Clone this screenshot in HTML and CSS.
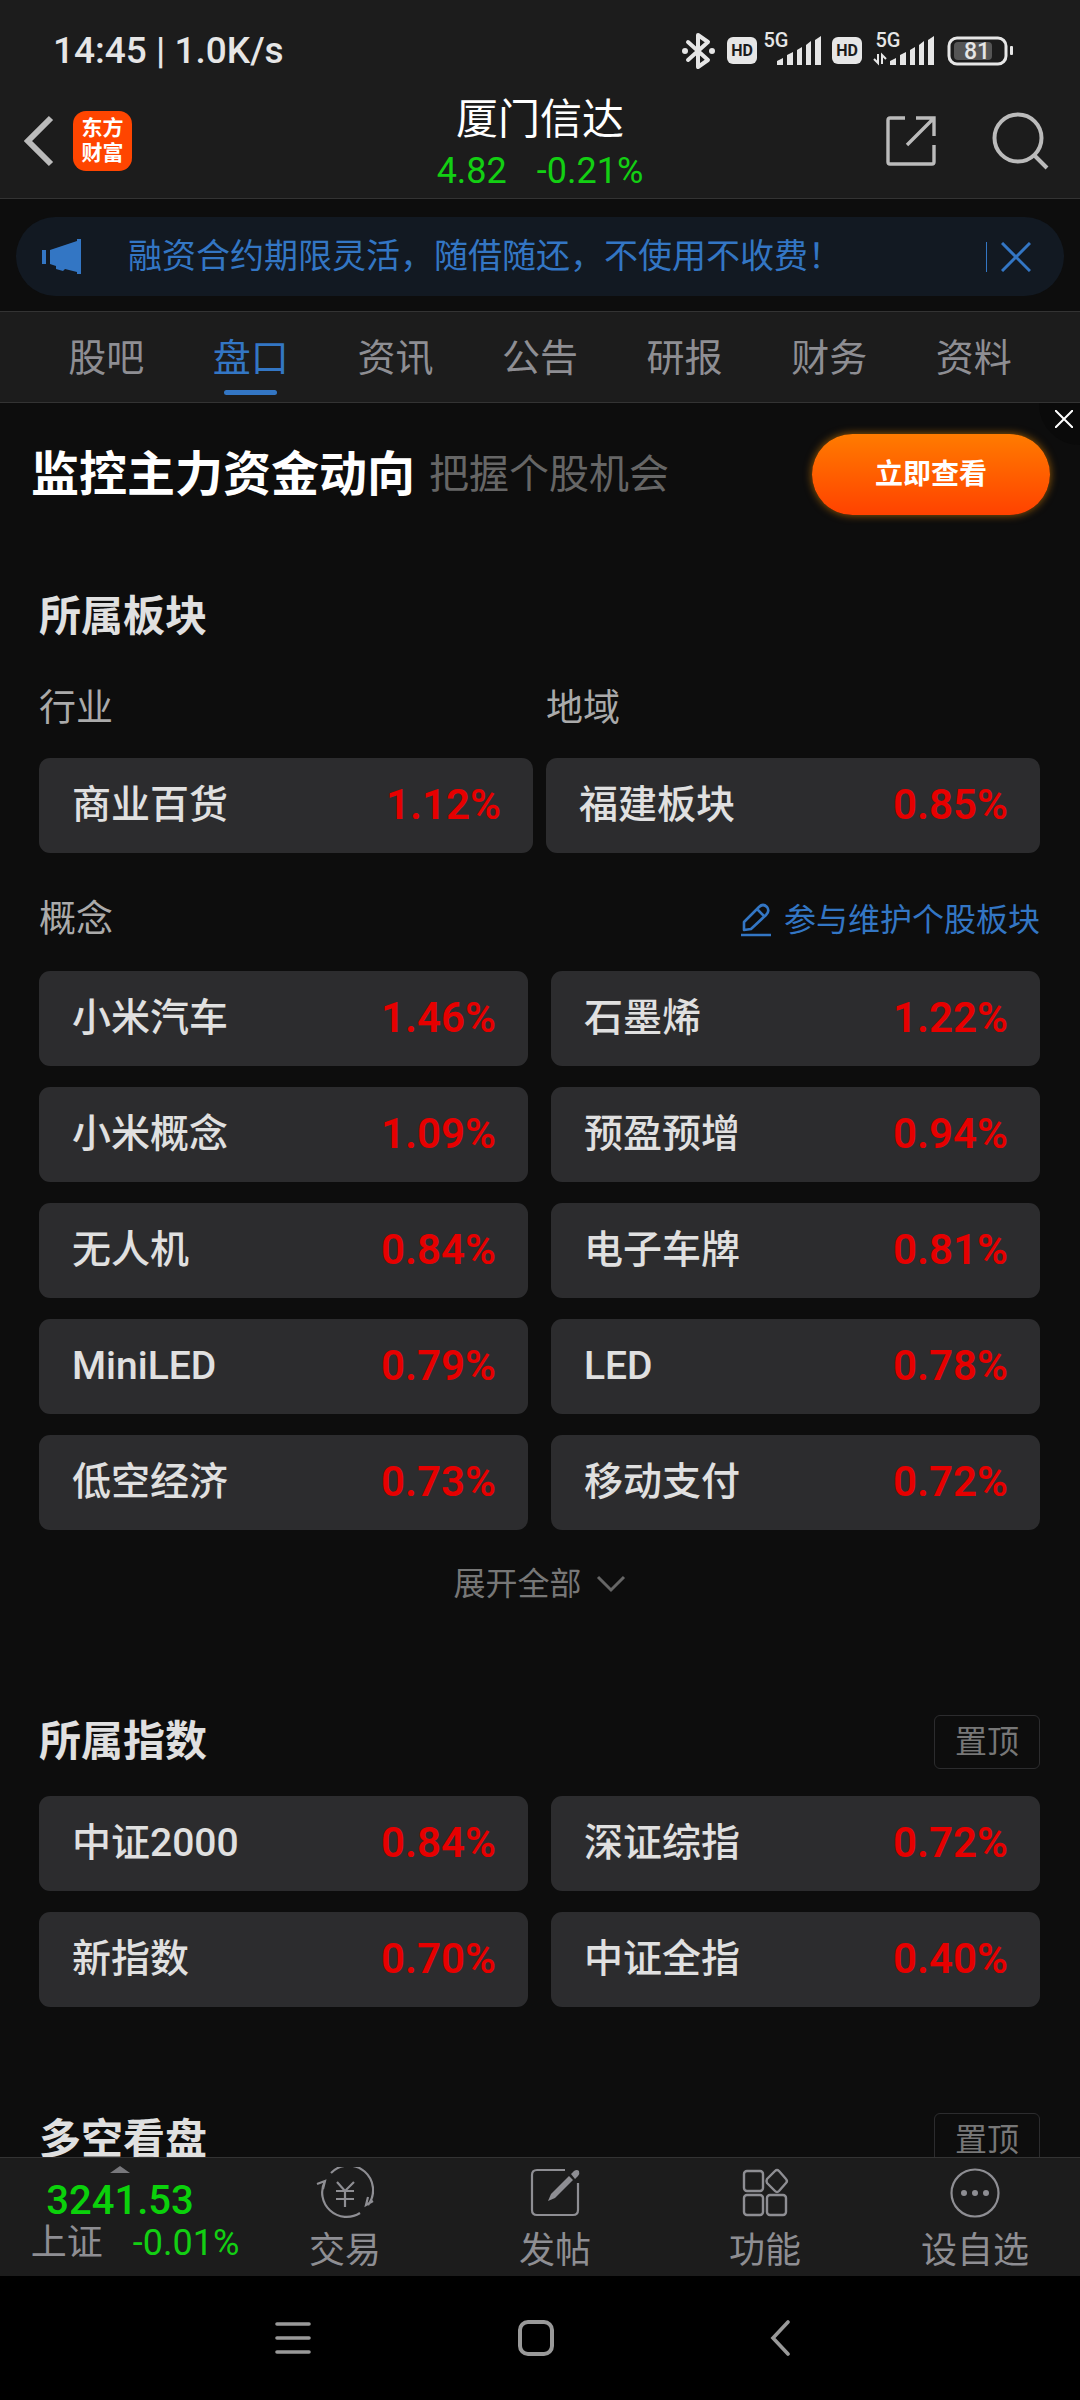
FILE: index.html
```html
<!DOCTYPE html>
<html lang="zh-CN">
<head>
    <meta charset="UTF-8">
    <meta name="viewport" content="width=device-width, initial-scale=1.0">
    <title>厦门信达</title>
    <link rel="stylesheet" href="styles.css">
</head>
<body>
<div class="app">
    <header class="header">
        <div class="status">
            <span>14:45 | 1.0K/s</span>
            <svg class="status-icons" width="336" height="44" viewBox="680 29 336 44">
                <!-- bluetooth -->
                <g fill="none" stroke="#e6e6e6" stroke-width="4" stroke-linecap="round" stroke-linejoin="round">
                    <path d="M688 42L708 60L698 67V35L708 42L688 60"/>
                </g>
                <circle cx="685" cy="51" r="3" fill="#e6e6e6"/>
                <circle cx="712" cy="51" r="3" fill="#e6e6e6"/>
                <!-- sim 1 -->
                <rect x="727" y="37" width="30" height="27" rx="6" fill="#e6e6e6"/>
                <text x="742" y="56" class="hd">HD</text>
                <text x="776" y="47" class="net">5G</text>
                <path fill="#e6e6e6" d="M777 65v-4l6-3v7zM787 65v-10l6-3v13zM797 65v-15l5-3v18zM806 65v-20l5-4v24zM815 65v-25l6-4v29z"/>
                <!-- sim 2 -->
                <rect x="832" y="37" width="30" height="27" rx="6" fill="#e6e6e6"/>
                <text x="847" y="56" class="hd">HD</text>
                <text x="888" y="47" class="net">5G</text>
                <path fill="none" stroke="#e6e6e6" stroke-width="2" d="M874 59l4 4v-9M882 64v-9l4 4"/>
                <path fill="#e6e6e6" d="M890 65v-4l6-3v7zM900 65v-10l6-3v13zM910 65v-15l5-3v18zM919 65v-20l5-4v24zM928 65v-25l6-4v29z"/>
                <!-- battery -->
                <rect x="949" y="38" width="57" height="26" rx="8" fill="none" stroke="#e6e6e6" stroke-width="3"/>
                <rect x="954" y="42" width="38" height="18" rx="4" fill="#555"/>
                <rect x="1010" y="46" width="3" height="9" rx="1" fill="#e6e6e6"/>
                <text x="977" y="59" class="level">81</text>
            </svg>
        </div>
        <div class="topbar">
            <div class="topbar-left">
                <button class="icon-btn" aria-label="返回">
                    <svg width="30" height="52" viewBox="0 0 30 52" fill="none" stroke="#bbb" stroke-width="6"><path d="M27 3L4 26L27 49"/></svg>
                </button>
                <a class="logo" href="#">东方<br>财富</a>
            </div>
            <div class="stock">
                <h1 class="stock-name">厦门信达</h1>
                <div class="stock-price"><span>4.82</span><span>-0.21%</span></div>
            </div>
            <div class="topbar-right">
                <button class="icon-btn" aria-label="分享">
                    <svg width="52" height="52" viewBox="0 0 52 52" fill="none" stroke="#bbb" stroke-width="3.4">
                        <path d="M20 3H5Q3 3 3 5V47Q3 49 5 49H47Q49 49 49 47V30M31 3H49V21M49 3L22 30"/>
                    </svg>
                </button>
                <button class="icon-btn" aria-label="搜索">
                    <svg width="58" height="58" viewBox="0 0 58 58" fill="none" stroke="#bbb" stroke-width="4">
                        <circle cx="26" cy="26" r="23.5"/><path d="M42 43L55 56"/>
                    </svg>
                </button>
            </div>
        </div>
    </header>

    <div class="notice-wrap">
        <div class="notice">
            <svg class="horn" width="40" height="36" viewBox="0 0 40 36" fill="#3376c4">
                <path d="M0 11h4v14H0zM8 11L35 2V0h4v35h-4v-2l-12-3l-2 2l-7-2v-3l-6-2z"/>
            </svg>
            <span class="notice-text">融资合约期限灵活，随借随还，不使用不收费！</span>
            <button class="icon-btn notice-close" aria-label="关闭">
                <svg width="30" height="30" viewBox="0 0 30 30" fill="none" stroke="#3376c4" stroke-width="3"><path d="M1 1L29 29M29 1L1 29"/></svg>
            </button>
        </div>
    </div>

    <nav class="tabs">
        <a href="#">股吧</a>
        <a href="#" class="active">盘口</a>
        <a href="#">资讯</a>
        <a href="#">公告</a>
        <a href="#">研报</a>
        <a href="#">财务</a>
        <a href="#">资料</a>
    </nav>

    <main class="content">
        <div class="ad">
            <strong class="ad-title">监控主力资金动向</strong>
            <span class="ad-sub">把握个股机会</span>
            <button class="ad-btn">立即查看</button>
            <button class="icon-btn ad-close" aria-label="关闭广告">
                <svg width="18" height="18" viewBox="0 0 18 18" fill="none" stroke="#fff" stroke-width="2"><path d="M0 0L18 18M18 0L0 18"/></svg>
            </button>
        </div>

        <section class="section first">
            <div class="head"><h2>所属板块</h2></div>
            <div class="grid pair">
                <div>
                    <h3 class="label">行业</h3>
                    <a class="card" href="#"><span>商业百货</span><b>1.12%</b></a>
                </div>
                <div>
                    <h3 class="label">地域</h3>
                    <a class="card" href="#"><span>福建板块</span><b>0.85%</b></a>
                </div>
            </div>
            <div class="label-row">
                <h3 class="label">概念</h3>
                <a class="edit" href="#">
                    <svg width="32" height="34" viewBox="0 0 32 34" fill="none" stroke="#3376c4" stroke-width="2.6" stroke-linejoin="round">
                        <path d="M4 27V19L19 4Q23 0 27 4Q30 8 26 12L11 26ZM17 6L24 13M1 32H31"/>
                    </svg>
                    参与维护个股板块
                </a>
            </div>
            <div class="grid">
                <a class="card" href="#"><span>小米汽车</span><b>1.46%</b></a>
                <a class="card" href="#"><span>石墨烯</span><b>1.22%</b></a>
                <a class="card" href="#"><span>小米概念</span><b>1.09%</b></a>
                <a class="card" href="#"><span>预盈预增</span><b>0.94%</b></a>
                <a class="card" href="#"><span>无人机</span><b>0.84%</b></a>
                <a class="card" href="#"><span>电子车牌</span><b>0.81%</b></a>
                <a class="card" href="#"><span>MiniLED</span><b>0.79%</b></a>
                <a class="card" href="#"><span>LED</span><b>0.78%</b></a>
                <a class="card" href="#"><span>低空经济</span><b>0.73%</b></a>
                <a class="card" href="#"><span>移动支付</span><b>0.72%</b></a>
            </div>
            <button class="expand">
                展开全部
                <svg width="30" height="18" viewBox="0 0 30 18" fill="none" stroke="#666" stroke-width="3"><path d="M2 2L15 15L28 2"/></svg>
            </button>
        </section>

        <section class="section">
            <div class="head"><h2>所属指数</h2><button class="pin">置顶</button></div>
            <div class="grid index-grid">
                <a class="card" href="#"><span>中证2000</span><b>0.84%</b></a>
                <a class="card" href="#"><span>深证综指</span><b>0.72%</b></a>
                <a class="card" href="#"><span>新指数</span><b>0.70%</b></a>
                <a class="card" href="#"><span>中证全指</span><b>0.40%</b></a>
            </div>
        </section>

        <section class="section">
            <div class="head"><h2>多空看盘</h2><button class="pin">置顶</button></div>
        </section>
    </main>

    <footer class="toolbar">
        <a class="market" href="#">
            <svg class="market-arrow" width="20" height="7" viewBox="0 0 20 7" fill="#77777b"><path d="M0 7L10 0L20 7z"/></svg>
            <span class="market-value">3241.53</span>
            <span class="market-row"><span>上证</span><em>-0.01%</em></span>
        </a>
        <a class="tool" href="#">
            <svg width="58" height="52" viewBox="0 0 58 52" fill="none" stroke="#8e8e93" stroke-width="2.2">
                <path d="M15 6A24.5 24.5 0 0 1 52 38M44 46A24.5 24.5 0 0 1 9 14M1 17L9 14L7 22M57 34L50 38L52 30"/>
                <path d="M21 15L29 24L38 15M29 24V40M20 24H38M20 32H38"/>
            </svg>
            <span>交易</span>
        </a>
        <a class="tool" href="#">
            <svg width="50" height="52" viewBox="0 0 50 52" fill="none" stroke="#8e8e93" stroke-width="2.2">
                <path d="M35 3H7Q2 3 2 8V43Q2 48 7 48H43Q48 48 48 43V16"/>
                <path fill="#8e8e93" stroke="none" d="M18 34L21 27L39 9L43 13L25 31zM41 7L44 4Q47 2 49 4Q50 7 48 9L45 12z"/>
            </svg>
            <span>发帖</span>
        </a>
        <a class="tool" href="#">
            <svg width="48" height="52" viewBox="0 0 48 52" fill="none" stroke="#8e8e93" stroke-width="2.4" stroke-linejoin="round">
                <rect x="3" y="4" width="19" height="20" rx="3"/>
                <rect x="3" y="28" width="19" height="20" rx="3"/>
                <rect x="26" y="28" width="19" height="20" rx="3"/>
                <path d="M34 4Q36 2 38 4L45 12Q47 14 45 16L38 24Q36 26 34 24L26 16Q25 14 26 12Z"/>
            </svg>
            <span>功能</span>
        </a>
        <a class="tool" href="#">
            <svg width="52" height="52" viewBox="0 0 52 52">
                <circle cx="26" cy="26" r="23.5" fill="none" stroke="#8e8e93" stroke-width="2.2"/>
                <g fill="#8e8e93"><circle cx="15" cy="26" r="3"/><circle cx="26" cy="26" r="3"/><circle cx="37" cy="26" r="3"/></g>
            </svg>
            <span>设自选</span>
        </a>
    </footer>

    <div class="sysnav">
        <button class="icon-btn" aria-label="菜单">
            <svg width="36" height="36" viewBox="0 0 36 36" stroke="#999" stroke-width="3.6" stroke-linecap="round"><path d="M2 4H34M2 18H34M2 32H34"/></svg>
        </button>
        <button class="icon-btn" aria-label="主页">
            <svg width="38" height="38" viewBox="0 0 38 38"><rect x="3" y="3" width="32" height="32" rx="8" fill="none" stroke="#999" stroke-width="4"/></svg>
        </button>
        <button class="icon-btn" aria-label="后退">
            <svg width="20" height="36" viewBox="0 0 20 36" fill="none" stroke="#999" stroke-width="3.6" stroke-linecap="round"><path d="M18 2L3 18L18 34"/></svg>
        </button>
    </div>
</div>
</body>
</html>
```
FILE: styles.css
```css
* {
    box-sizing: border-box;
}

body {
    margin: 0;
    background-color: #0d0d0d;
    color: #e0e0e0;
    font-family: Roboto, "Noto Sans CJK SC", sans-serif;
    line-height: 1.2;
}

h1, h2, h3 {
    margin: 0;
}

a {
    color: inherit;
    text-decoration: none;
}

button {
    padding: 0;
    border: none;
    background: none;
    color: inherit;
    font-family: inherit;
    line-height: inherit;
    cursor: pointer;
}

svg {
    display: block;
}

.app {
    display: flex;
    flex-direction: column;
    height: 100vh;
}

/* header */
.header {
    flex: none;
    background-color: #1c1c1c;
    border-bottom: 1px solid #333;
}

.status {
    display: flex;
    justify-content: space-between;
    align-items: center;
    height: 84px;
    padding: 18px 64px 0 53px;
    color: #e6e6e6;
    font-size: 37px;
    font-weight: 500;
}

.status-icons text {
    fill: #e6e6e6;
    text-anchor: middle;
    font-size: 20px;
    font-weight: 500;
}

.status-icons .hd {
    fill: #1c1c1c;
    font-size: 16px;
    font-weight: 700;
}

.status-icons .level {
    font-size: 23px;
}

.topbar {
    display: grid;
    grid-template-columns: 1fr auto 1fr;
    align-items: center;
    height: 114px;
    padding: 0 24px;
}

.topbar-left {
    display: flex;
    align-items: center;
    gap: 19px;
}

.topbar-right {
    display: flex;
    justify-content: flex-end;
    align-items: center;
    gap: 55px;
    padding-right: 6px;
}

.logo {
    width: 59px;
    height: 60px;
    padding-top: 5px;
    border-radius: 13px;
    background-color: #ff4500;
    color: #fff;
    font-size: 21px;
    font-weight: 700;
    line-height: 25px;
    text-align: center;
}

.stock {
    padding-top: 7px;
    text-align: center;
}

.stock-name {
    color: #fff;
    font-size: 42px;
    font-weight: 400;
    line-height: 52px;
}

.stock-price {
    display: flex;
    justify-content: center;
    gap: 30px;
    color: #13cf13;
    font-size: 36px;
    line-height: 50px;
}

/* notice */
.notice-wrap {
    padding: 18px 16px 15px;
}

.notice {
    display: flex;
    align-items: center;
    height: 79px;
    padding: 0 33px 0 26px;
    border-radius: 40px;
    background-color: #121922;
    color: #3376c4;
}

.notice-text {
    flex: 1;
    padding-left: 46px;
    font-size: 34px;
    white-space: nowrap;
}

.notice-close {
    padding-left: 14px;
    border-left: 1px solid #3376c4;
}

/* tabs */
.tabs {
    display: flex;
    flex: none;
    height: 92px;
    padding: 0 34px;
    background-color: #1c1c1c;
    border-top: 1px solid #333;
    border-bottom: 1px solid #333;
    color: #8e8e93;
    font-size: 38px;
    line-height: 92px;
}

.tabs a {
    position: relative;
    flex: 1;
    text-align: center;
}

.tabs .active {
    color: #3376c4;
}

.tabs .active::after {
    content: "";
    position: absolute;
    left: 50%;
    bottom: 7px;
    width: 53px;
    height: 5px;
    margin-left: -27px;
    border-radius: 3px;
    background-color: #3376c4;
}

.content {
    flex: 1;
    min-height: 0;
    overflow: hidden;
}

/* ad banner */
.ad {
    position: relative;
    display: flex;
    align-items: center;
    height: 143px;
    padding: 0 30px 0 31px;
}

.ad-title {
    color: #fff;
    font-size: 48px;
}

.ad-sub {
    flex: 1;
    padding-left: 14px;
    color: #666;
    font-size: 40px;
}

.ad-btn {
    width: 238px;
    height: 81px;
    border-radius: 41px;
    background: linear-gradient(#ff7b00, #ff4200);
    box-shadow: 0 0 8px rgba(255, 150, 0, 0.6);
    color: #fff;
    font-size: 28px;
    font-weight: 700;
}

.ad-close {
    position: absolute;
    top: 0;
    right: 0;
    padding: 7px 7px 17px 16px;
    border-bottom-left-radius: 41px;
    background-color: #0a0a0a;
}

/* sections */
.section {
    margin: 106px 40px 0 39px;
}

.section.first {
    margin-top: 44px;
}

.head {
    display: flex;
    justify-content: space-between;
    align-items: center;
    height: 54px;
}

.head h2 {
    font-size: 42px;
    font-weight: 700;
}

.pin {
    width: 106px;
    height: 54px;
    border: 1px solid #2c2c2e;
    border-radius: 6px;
    color: #777;
    font-size: 32px;
}

.label {
    color: #aaa;
    font-size: 37px;
    font-weight: 400;
    line-height: 50px;
}

.pair .label {
    margin: 40px 0 24px;
}

.label-row {
    display: flex;
    justify-content: space-between;
    align-items: center;
    margin: 42px 0 26px;
}

.edit {
    display: flex;
    align-items: center;
    gap: 12px;
    color: #3376c4;
    font-size: 32px;
}

.grid {
    display: grid;
    grid-template-columns: 1fr 1fr;
    gap: 21px 23px;
}

.grid.pair {
    gap: 13px;
}

.index-grid {
    margin-top: 27px;
}

.card {
    display: flex;
    justify-content: space-between;
    align-items: center;
    height: 95px;
    padding: 0 32px 0 33px;
    border-radius: 11px;
    background-color: #2c2c2e;
    font-size: 39px;
    font-weight: 500;
}

.card b {
    color: #e60000;
    font-size: 42px;
    font-weight: 600;
}

.expand {
    display: flex;
    justify-content: center;
    align-items: center;
    gap: 14px;
    width: 100%;
    height: 50px;
    margin-top: 29px;
    color: #777;
    font-size: 32px;
}

/* bottom bar */
.toolbar {
    display: grid;
    grid-template-columns: 8fr 7fr 7fr 7fr 7fr;
    flex: none;
    height: 119px;
    background-color: #1c1c1c;
    border-top: 1px solid #333;
    color: #8e8e93;
    font-size: 36px;
}

.market {
    display: flex;
    flex-direction: column;
    align-items: center;
    padding-top: 8px;
    line-height: 42px;
    white-space: nowrap;
}

.market-value {
    padding-top: 7px;
    color: #0bd10b;
    font-size: 40px;
    font-weight: 500;
}

.market-row {
    display: flex;
    gap: 30px;
    padding-left: 30px;
}

.market em {
    color: #13cf13;
    font-style: normal;
}

.tool {
    display: flex;
    flex-direction: column;
    align-items: center;
    gap: 7px;
    padding-top: 9px;
    line-height: 50px;
}

/* system navigation */
.sysnav {
    display: grid;
    grid-template-columns: repeat(3, 1fr);
    flex: none;
    place-items: center;
    height: 124px;
    padding: 0 178px 0 171px;
    background-color: #000;
}
```
